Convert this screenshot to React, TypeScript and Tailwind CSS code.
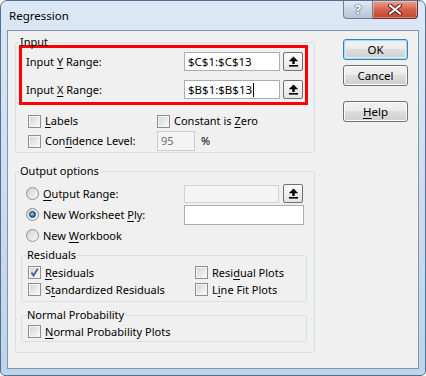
import React from 'react';

// Windows 7 style "Regression" dialog (Excel Analysis ToolPak)

const font = "font-['Segoe_UI','Noto_Sans',sans-serif]";

function U({ children }: { children: React.ReactNode }) {
    return <span className="underline decoration-1 underline-offset-[2px]">{children}</span>;
}

function CheckBox({ checked = false }: { checked?: boolean }) {
    return (
        <span className="flex h-[13px] w-[13px] shrink-0 items-center justify-center border border-[#8e8f8f] bg-white">
            <span className="relative flex h-[11px] w-[11px] items-center justify-center border border-[#f4f4f4] bg-gradient-to-br from-[#d6d6d6] to-[#f9f9f9]">
                {checked && (
                    <svg width="11" height="11" viewBox="0 0 11 11" className="absolute -left-px -top-px">
                        <path d="M2.5 5.5 L4.5 8.5 L8.8 1.8" fill="none" stroke="#4a5f97" strokeWidth="1.8" />
                    </svg>
                )}
            </span>
        </span>
    );
}

function Radio({ checked = false }: { checked?: boolean }) {
    return (
        <span className="flex h-[13px] w-[13px] shrink-0 items-center justify-center rounded-full border border-[#8e8f8f] bg-gradient-to-br from-[#d0d0d0] to-[#fbfbfb]">
            {checked && (
                <span className="h-[7px] w-[7px] rounded-full bg-[radial-gradient(circle_at_40%_40%,#9fd3f7,#1a5d99_70%)] border border-[#0e3f72]" />
            )}
        </span>
    );
}

function RefButton() {
    return (
        <span className="flex h-[19px] w-[20px] shrink-0 items-center justify-center rounded-[2px] border border-[#707070] bg-gradient-to-b from-[#fcfcfc] to-[#e4e4e4]">
            <svg width="11" height="11" viewBox="0 0 11 11">
                <polygon points="5.5,0.5 0.8,5.2 10.2,5.2" fill="#000" />
                <rect x="4.3" y="5" width="2.4" height="3" fill="#000" />
                <rect x="1" y="9" width="9" height="1.6" fill="#000" />
            </svg>
        </span>
    );
}

function DialogButton({ children, isDefault = false, className = '' }: { children: React.ReactNode; isDefault?: boolean; className?: string }) {
    return (
        <div
            className={`flex h-[21px] w-[65px] items-center justify-center rounded-[3px] border text-[11.5px] leading-none text-black ${
                isDefault
                    ? 'border-[#3c7fb1] shadow-[inset_0_0_0_1px_#a5ddf5,inset_0_0_0_2px_#dbeffb]'
                    : 'border-[#707070] shadow-[inset_0_0_0_1px_#fcfcfc]'
            } bg-[linear-gradient(#f2f2f2_0%,#ebebeb_45%,#dddddd_50%,#cfcfcf_100%)] ${className}`}
        >
            {children}
        </div>
    );
}

export default function App() {
    return (
        <div className={`${font} h-[376px] w-[426px] overflow-hidden bg-white text-[11px] leading-[14px] text-black`}>
            <div className="flex h-[376px] w-[426px] flex-col rounded-t-[7px] rounded-b-[5px] border border-[#52708f] bg-gradient-to-b from-[#dce8f6] via-[#cddcef] to-[#bed3ec]">
                {/* Title bar */}
                <div className="flex h-[29px] items-start justify-between">
                    <div className="ml-[8px] mt-[8px] text-[11.5px] leading-[14px]">Regression</div>
                    <div className="mr-[7px] flex">
                        <div className="flex h-[18px] w-[30px] items-center justify-center rounded-bl-[4px] border border-t-0 border-[#6d7f96] bg-gradient-to-b from-[#e3ebf4] via-[#c8d5e4] to-[#b5c5d8] text-[13px] font-bold leading-none text-white [text-shadow:0_0_2px_#3a4a5e,0_0_1px_#3a4a5e]">
                            ?
                        </div>
                        <div className="flex h-[18px] w-[45px] items-center justify-center rounded-br-[4px] border border-l-0 border-t-0 border-[#6b2a20] bg-gradient-to-b from-[#e8a290] via-[#d4634e] to-[#c3422c] shadow-[inset_0_0_0_1px_rgba(255,255,255,0.35)]">
                            <svg width="14" height="11" viewBox="0 0 14 11">
                                <path d="M2 1.5 L12 9.5 M12 1.5 L2 9.5" stroke="#4a1a12" strokeWidth="4" strokeLinecap="round" />
                                <path d="M2 1.5 L12 9.5 M12 1.5 L2 9.5" stroke="#ffffff" strokeWidth="2.2" strokeLinecap="round" />
                            </svg>
                        </div>
                    </div>
                </div>

                {/* Client area */}
                <div className="mx-[6px] mb-[6px] flex flex-1 border border-[#8394ad] bg-[#f0f0f0]">
                    {/* Left column */}
                    <div className="ml-[7px] flex w-[300px] flex-col">
                        {/* Input group */}
                        <fieldset className="mt-[5px] rounded-[3px] border border-[#d5dfe5] pb-[1px]">
                            <legend className="ml-[3px] px-[1px] leading-[12px]">Input</legend>
                            <div className="-mt-[3px] ml-[3px] w-[289px] border-[3px] border-[#ff0000] pb-[3px] pl-[4px] pr-[2px] pt-[4px]">
                                <div className="flex h-[19px] items-center">
                                    <span className="flex-1">
                                        Input <U>Y</U> Range:
                                    </span>
                                    <div className="flex h-[19px] w-[96px] items-center border border-[#abadb3] bg-white pl-[3px] text-[11.5px]">$C$1:$C$13</div>
                                    <span className="ml-[3px]">
                                        <RefButton />
                                    </span>
                                </div>
                                <div className="mt-[9px] flex h-[19px] items-center">
                                    <span className="flex-1">
                                        Input <U>X</U> Range:
                                    </span>
                                    <div className="flex h-[19px] w-[96px] items-center border border-[#abadb3] bg-white pl-[3px] text-[11.5px]">
                                        $B$1:$B$13
                                        <span className="ml-px h-[14px] w-px bg-black" />
                                    </div>
                                    <span className="ml-[3px]">
                                        <RefButton />
                                    </span>
                                </div>
                            </div>
                            <div className="mt-[6px] grid grid-cols-[129px_1fr] pl-[12px]">
                                <div className="flex h-[20px] items-center gap-[4px]">
                                    <CheckBox />
                                    <span>
                                        <U>L</U>abels
                                    </span>
                                </div>
                                <div className="flex h-[20px] items-center gap-[4px]">
                                    <CheckBox />
                                    <span>
                                        Constant is <U>Z</U>ero
                                    </span>
                                </div>
                                <div className="flex h-[20px] items-center gap-[4px]">
                                    <CheckBox />
                                    <span>
                                        Con<U>f</U>idence Level:
                                    </span>
                                </div>
                                <div className="flex h-[20px] items-center">
                                    <div className="flex h-[20px] w-[38px] items-center border border-[#cccccc] bg-[#f4f4f4] pl-[3px] text-[#6d6d6d]">95</div>
                                    <span className="ml-[6px]">%</span>
                                </div>
                            </div>
                        </fieldset>

                        {/* Output options group */}
                        <fieldset className="mt-[12px] rounded-[3px] border border-[#d5dfe5] pb-[10px]">
                            <legend className="ml-[3px] px-[1px] leading-[12px]">Output options</legend>
                            <div className="flex flex-col pl-[10px] pt-[6px]">
                                <div className="flex h-[21px] items-center">
                                    <div className="flex w-[158px] items-center gap-[4px]">
                                        <Radio />
                                        <span>
                                            <U>O</U>utput Range:
                                        </span>
                                    </div>
                                    <div className="h-[18px] w-[95px] border border-[#d2d2d2] bg-[#f4f4f4]" />
                                    <span className="ml-[4px]">
                                        <RefButton />
                                    </span>
                                </div>
                                <div className="flex h-[21px] items-center">
                                    <div className="flex w-[158px] items-center gap-[4px]">
                                        <Radio checked />
                                        <span>
                                            New Worksheet <U>P</U>ly:
                                        </span>
                                    </div>
                                    <div className="h-[20px] w-[120px] border border-[#abadb3] bg-white" />
                                </div>
                                <div className="flex h-[21px] items-center gap-[4px]">
                                    <Radio />
                                    <span>
                                        New <U>W</U>orkbook
                                    </span>
                                </div>
                            </div>

                            {/* Residuals */}
                            <fieldset className="ml-[5px] mt-[3px] w-[286px] rounded-[3px] border border-[#d5dfe5] pb-[3px]">
                                <legend className="ml-[4px] px-[1px] leading-[12px]">Residuals</legend>
                                <div className="grid grid-cols-[167px_1fr] pl-[6px] pt-[3px]">
                                    <div className="flex h-[17px] items-center gap-[4px]">
                                        <CheckBox checked />
                                        <span>
                                            <U>R</U>esiduals
                                        </span>
                                    </div>
                                    <div className="flex h-[17px] items-center gap-[4px]">
                                        <CheckBox />
                                        <span>
                                            Resi<U>d</U>ual Plots
                                        </span>
                                    </div>
                                    <div className="flex h-[17px] items-center gap-[4px]">
                                        <CheckBox />
                                        <span>
                                            S<U>t</U>andardized Residuals
                                        </span>
                                    </div>
                                    <div className="flex h-[17px] items-center gap-[4px]">
                                        <CheckBox />
                                        <span>
                                            L<U>i</U>ne Fit Plots
                                        </span>
                                    </div>
                                </div>
                            </fieldset>

                            {/* Normal Probability */}
                            <fieldset className="ml-[5px] mt-[7px] w-[286px] rounded-[3px] border border-[#d5dfe5] pb-[1px]">
                                <legend className="ml-[4px] px-[1px] leading-[12px]">Normal Probability</legend>
                                <div className="mt-[2px] flex h-[17px] items-center gap-[4px] pl-[6px]">
                                    <CheckBox />
                                    <span>
                                        <U>N</U>ormal Probability Plots
                                    </span>
                                </div>
                            </fieldset>
                        </fieldset>
                    </div>

                    {/* Right column buttons */}
                    <div className="ml-[28px] flex flex-col pt-[8px]">
                        <DialogButton isDefault>OK</DialogButton>
                        <DialogButton className="mt-[5px]">Cancel</DialogButton>
                        <DialogButton className="mt-[15px]">
                            <U>H</U>elp
                        </DialogButton>
                    </div>
                </div>
            </div>
        </div>
    );
}
